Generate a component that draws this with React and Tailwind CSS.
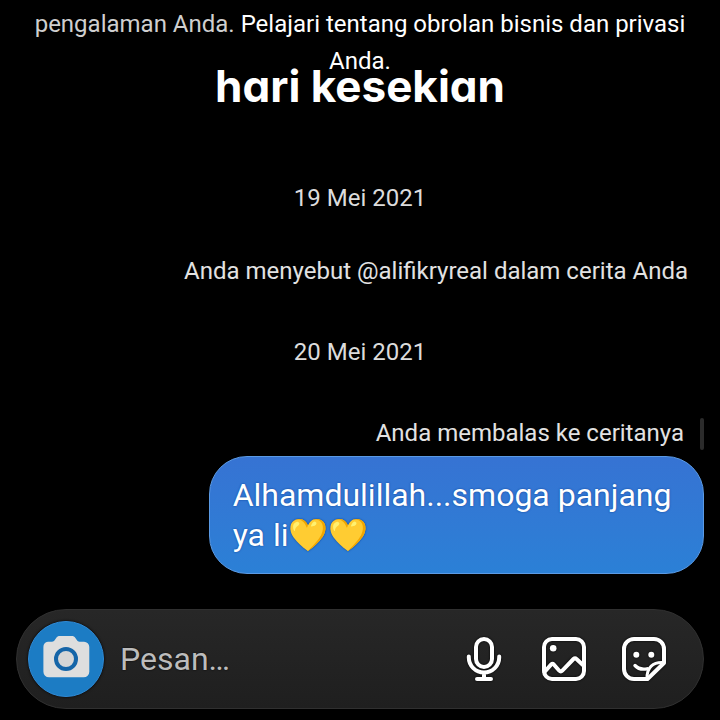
import { useState } from "react";

function CameraIcon() {
  return (
    <svg viewBox="0 0 48 48" className="size-12" aria-hidden="true">
      <path
        d="M6 6.7h4c1.300 0 2-.6 2.800-1.700l1.400-2c1-1.400 2-2 3.600-2h12c1.600 0 2.600.6 3.600 2l1.400 2c.8 1.100 1.500 1.700 2.800 1.700h4.400a5.300 5.300 0 0 1 5.300 5.300v24.700a5.600 5.600 0 0 1-5.600 5.600H7a5.600 5.600 0 0 1-5.600-5.600V12A5.300 5.300 0 0 1 6 6.700z"
        fill="#dedede"
      />
      <circle cx="24" cy="24" r="10" fill="#d6d6d6" stroke="#1565a8" strokeWidth="4" />
    </svg>
  );
}

function IconFrame({ children }) {
  return (
    <svg
      viewBox="0 0 48 48"
      fill="none"
      stroke="currentColor"
      strokeWidth="4"
      strokeLinecap="round"
      strokeLinejoin="round"
      className="size-12 drop-shadow-[0_0_1px_#000]"
      aria-hidden="true"
    >
      {children}
    </svg>
  );
}

function MicIcon() {
  return (
    <IconFrame>
      <rect x="16" y="4" width="16" height="28" rx="8" />
      <path d="M8.800 21.500v1a15.200 15 0 0 0 30.400 0v-1M24 38v6M17 44h14" />
    </IconFrame>
  );
}

function GalleryIcon() {
  return (
    <IconFrame>
      <rect x="4" y="4" width="40" height="40" rx="8" />
      <circle cx="13.200" cy="13.200" r="3.300" fill="currentColor" stroke="none" />
      <path d="M4.500 37l6.500-7.300q1.500-1.500 3 0l5.300 6q1.500 1.500 3 0L33.500 24q1.500-1.500 3 0l7.500 7" />
    </IconFrame>
  );
}

function StickerIcon() {
  return (
    <IconFrame>
      <path d="M44 28V14A10 10 0 0 0 34 4H14A10 10 0 0 0 4 14v20a10 10 0 0 0 10 10h13.500z" />
      <path d="M44 27.500c-11-1-17.500 5-17 16.500" strokeWidth="3" />
      <path d="M15 30.500c3 3.300 7 4.200 12 3.300" strokeWidth="3.400" />
      <circle cx="16.300" cy="19.700" r="3" fill="currentColor" stroke="none" />
      <circle cx="31.300" cy="19.700" r="3" fill="currentColor" stroke="none" />
    </IconFrame>
  );
}

function DateLabel({ children }) {
  return <p className="text-center text-[#dcdcdc]">{children}</p>;
}

export default function App() {
  const [message, setMessage] = useState("");

  return (
    <div className="relative flex min-h-screen flex-col bg-black px-4 font-[Roboto,sans-serif] text-2xl leading-[37px] text-[#e2e2e2]">
      <p className="px-4 pt-1.5 text-center">
        <span className="text-[#cfcfcf]">pengalaman Anda.</span>{" "}
        <a href="#privasi" className="text-white">
          Pelajari tentang obrolan bisnis dan privasi Anda.
        </a>
      </p>

      {/* Caption que va encima del chat */}
      <h1 className="absolute inset-x-0 top-16 text-center font-[Inter,sans-serif] text-[44px] leading-11 font-bold text-white [font-feature-settings:'cv11']">
        hari kesekian
      </h1>

      <main className="flex flex-col pt-25">
        <DateLabel>19 Mei 2021</DateLabel>
        <p className="mt-9 pr-4 text-right">
          Anda menyebut @alifikryreal dalam cerita Anda
        </p>
        <div className="mt-11">
          <DateLabel>20 Mei 2021</DateLabel>
        </div>

        <div className="mt-11 flex items-center justify-end gap-4">
          <p>Anda membalas ke ceritanya</p>
          <span className="h-8 w-1 rounded-full bg-[#2b2b2b]" />
        </div>

        <div className="mt-1 ml-auto max-w-[72%] rounded-[38px] border border-[#5b9ae4] bg-linear-to-b from-[#3673d3] to-[#2b80d6] px-[23px] py-[18px] text-[32px] leading-10 text-white text-shadow-[0_0_2px_#0b3f94]">
          Alhamdulillah...smoga panjang ya li💛💛
        </div>
      </main>

      <form
        onSubmit={(e) => e.preventDefault()}
        className="mt-auto mb-[11px] flex items-center rounded-full border border-[#303030] bg-linear-to-b from-[#272727] to-[#1f1f1f] py-[11px] pr-[35px] pl-[11px]"
      >
        <button
          type="button"
          aria-label="Kamera"
          className="flex size-[76px] shrink-0 items-center justify-center rounded-full border border-[#2f8ad6] bg-[#1c7cc4] shadow-[0_0_3px_#000]"
        >
          <CameraIcon />
        </button>
        <input
          type="text"
          aria-label="Pesan"
          placeholder="Pesan…"
          value={message}
          onChange={(e) => setMessage(e.target.value)}
          className="ml-4 min-w-0 flex-1 bg-transparent text-[32px] leading-10 text-white outline-none placeholder:text-[#bcbcbc] text-shadow-[0_0_2px_#000]"
        />
        <div className="flex gap-8 text-white">
          <button type="button" aria-label="Pesan suara">
            <MicIcon />
          </button>
          <button type="button" aria-label="Galeri">
            <GalleryIcon />
          </button>
          <button type="button" aria-label="Stiker">
            <StickerIcon />
          </button>
        </div>
      </form>
    </div>
  );
}
